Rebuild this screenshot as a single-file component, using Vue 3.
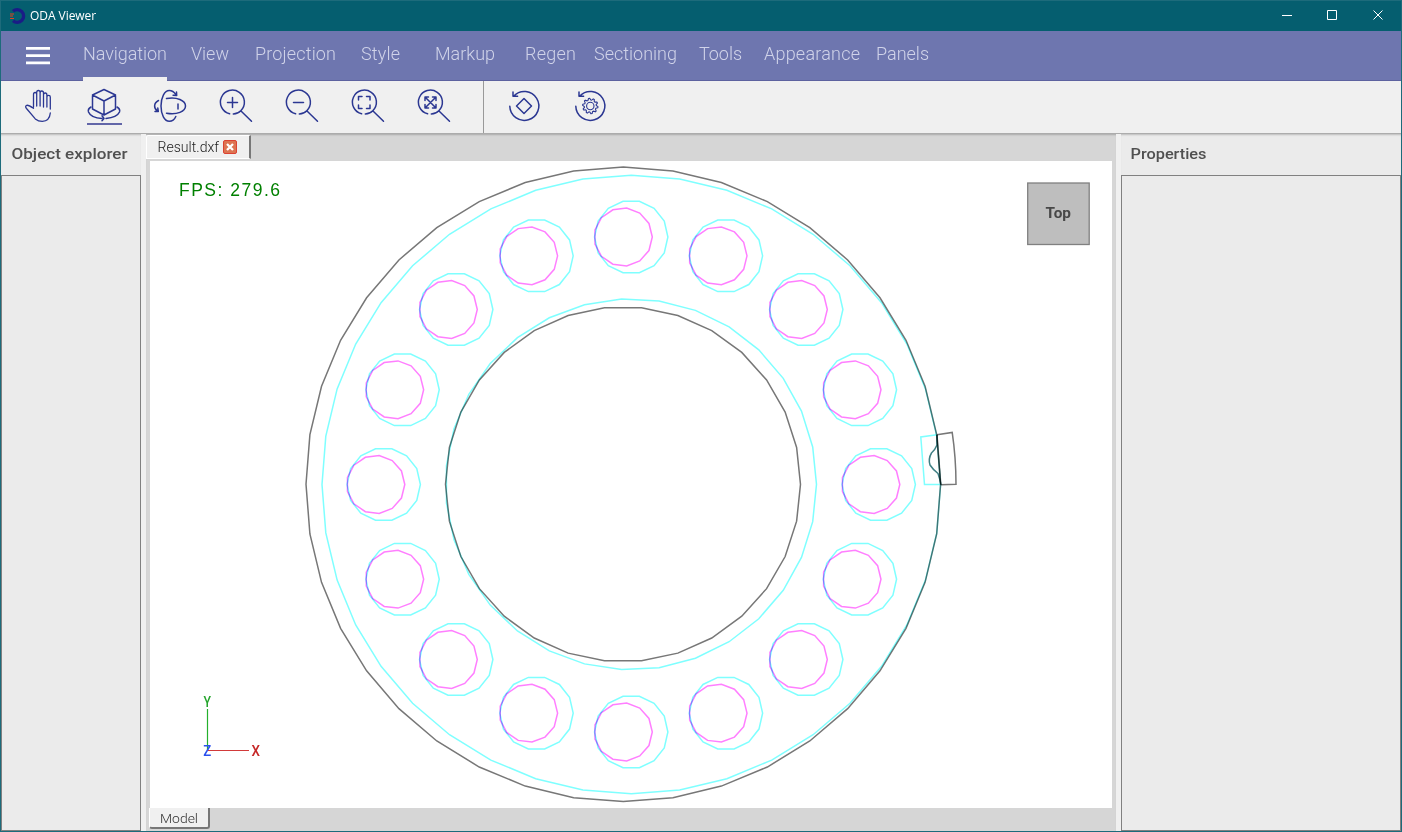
<script setup>
const menu = [
  { t: 'Navigation', x: 83, w: 84, on: true }, { t: 'View', x: 191, w: 38 },
  { t: 'Projection', x: 255, w: 81 }, { t: 'Style', x: 361, w: 39 },
  { t: 'Markup', x: 435, w: 60 }, { t: 'Regen', x: 525, w: 51 },
  { t: 'Sectioning', x: 594, w: 83 }, { t: 'Tools', x: 699, w: 43 },
  { t: 'Appearance', x: 764, w: 96 }, { t: 'Panels', x: 876, w: 53 }
].map((m, i, a) => ({ ...m, gap: i ? m.x - a[i - 1].x - a[i - 1].w : 0 }))

const poly = (cx, cy, r, n, start = 0) =>
  Array.from({ length: n }, (_, i) => {
    const a = ((start + (i * 360) / n) * Math.PI) / 180
    return (cx + r * Math.cos(a)).toFixed(2) + ',' + (cy - r * Math.sin(a)).toFixed(2)
  }).join(' ')

const holes = Array.from({ length: 16 }, (_, i) => {
  const a = (i * Math.PI) / 8
  const x = 623.2 + 247.5 * Math.cos(a)
  const y = 484.5 - 247.5 * Math.sin(a)
  return { c: poly(x + 8, y, 36.7, 14), m: poly(x, y, 29.1, 13) }
})

// Ten-tooth gear outline: two outer and two inner points per tooth
const gear = Array.from({ length: 40 }, (_, i) => {
  const a = ((i * 9 + 4.5) * Math.PI) / 180
  const r = i % 4 < 2 ? 7.7 : 6
  return (590.3 + r * Math.cos(a)).toFixed(2) + ',' + (106 + r * Math.sin(a)).toFixed(2)
}).join(' ')
</script>

<template>
  <div class="window">
    <header class="title">
      <svg class="logo" width="18" height="18" viewBox="0 0 18 18">
        <path d="M5 4.200A6.400 6.400 0 1 1 5 13.800" fill="none" stroke="#1a1c86" stroke-width="3.300" />
        <path d="M2 7h4M2 9h3M2 11.500h4" stroke="#e0441f" stroke-width="1.200" />
      </svg>
      <span class="app-name">ODA Viewer</span>
      <svg class="controls" width="104" height="12" viewBox="0 0 104 12" fill="none" stroke="#fff">
        <path d="M0 6.500h10M45.500 1.500h9v9h-9zM91.500 1.500l9 9M100.500 1.500l-9 9" />
      </svg>
    </header>

    <nav class="menu">
      <svg class="burger" width="24" height="19" viewBox="0 0 24 19"><path d="M0 2.300h24M0 9.700h24M0 16.800h24" stroke="#fff" stroke-width="2.700" /></svg>
      <div v-for="m in menu" :key="m.t" class="item" :class="{ on: m.on }" :style="{ width: m.w + 'px', marginLeft: m.gap + 'px' }">
        <svg :width="m.w + 2" height="50"><text x="0" y="29" :textLength="m.w">{{ m.t }}</text></svg>
      </div>
    </nav>

    <div class="toolbar">
      <svg width="640" height="52" viewBox="1 81 640 52" fill="none" stroke="#2b3792" stroke-width="1.500" stroke-linecap="round" stroke-linejoin="round">
        <path d="M33.500 107V94.500q0-2 1.600-2t1.600 2V106M36.700 106V92.500q0-2 1.700-2t1.700 2V106M40.100 93q0-2 1.700-2t1.700 2V107M43.500 95q0-2 1.700-2t1.700 2V107M46.900 97q0-1.700 1.700-1.700t1.700 1.700V109M50.300 113q-.7 8-8 8.400q-4 0-7-2.500L26.500 108.500q-1.800-2.500.2-3.200q1.700-.5 6.800 3" stroke-width="1.300" />
        <path d="M104 89.500L115.500 95V109L104 115 92.500 109V95zM92.500 95L104 101 115.500 95M104 101V115" />
        <path d="M91 107Q87.500 109 88.500 112Q91 118 102 118.500M102 115.800l2 2.700-2 2.200M117 107Q120.500 109 119.500 112Q117 117.500 106 118.500" />
        <path d="M87 124h35" stroke="#6266a8" stroke-width="2" stroke-linecap="butt" />
        <path d="M175.800 94.500C174 91.800 171.800 90.500 169.300 90.500C164.500 90.500 161 97.500 161 106C161 114.500 164.500 121.300 169.300 121.300C172 121.300 174.500 119.500 175.800 116.500M176.500 92l.2 3.500-3.600-.2" />
        <path d="M166.500 98.500C177 96.500 185.500 100.500 185.500 106C185.500 111.500 177 115 166.500 113.200M158.500 100.500C153.500 103 153.500 108.500 157.500 111M155 111.500l3.300-.1-.5-3.300M178 104v5" />
        <g v-for="x in [232.300, 298.300, 364.300, 430.300]" :key="x">
          <path :d="`M${x - 2.700} 113.800A12 12 0 1 1 ${x + 8.500} 110.700Q${x + 5.500} 113.800 ${x + 1} 114M${x + 8.700} 111l10.500 10.300`" />
        </g>
        <path d="M227.500 102.500h10M232.500 97.500v10M293.500 102.500h10M358.500 100v-3.500h3.500M366.500 96.500h3.500v3.500M370 105v3.500h-3.500M362 108.500h-3.500v-3.500" />
        <path d="M425 97l11 11M436 97l-11 11M425 100.500V97h3.500M432.500 97h3.500v3.500M436 104.500v3.500h-3.500M428.500 108h-3.500v-3.500" />
        <g v-for="x in [524.300, 590.300]" :key="x">
          <path :d="`M${x - 14.500} 106.300A14.500 14.500 0 1 0 ${x - 10.500} 95.900M${x - 11.300} 92v4.300h4.600`" />
        </g>
        <path d="M524 98.500l7.500 7.500-7.500 7.500-7.500-7.500z" />
        <polygon :points="gear" stroke-width="1.100" />
        <circle cx="590.300" cy="106" r="3.700" stroke-width="1.100" />
        <path d="M483.500 81v52" stroke="#999" stroke-width="1" />
      </svg>
    </div>

    <main class="body">
      <aside class="panel left"><h2><svg width="130" height="40"><text x="10.500" y="25" textLength="116" lengthAdjust="spacingAndGlyphs">Object explorer</text></svg></h2><div class="list"></div></aside>
      <section class="center">
        <div class="tabs">
          <div class="tab">
            <svg width="100" height="24"><text x="10.500" y="18" textLength="61.500" lengthAdjust="spacingAndGlyphs">Result.dxf</text>
              <rect x="76.500" y="6.500" width="13" height="13" rx="1.500" fill="#dd7452" stroke="#dc4232" />
              <path d="M80 10l6 6M86 10l-6 6" stroke="#fff" stroke-width="2.300" />
            </svg>
          </div>
        </div>
        <svg class="view" width="962" height="647" viewBox="150 161 962 647">
          <g class="drawing" fill="none" stroke-width="1.500">
            <polygon :points="poly(623.3, 484.300, 317.300, 40)" stroke="#777" />
            <polygon :points="poly(631.3, 484.500, 309.300, 40)" stroke="#7fffff" />
            <polygon :points="poly(623, 484.300, 177.500, 30)" stroke="#777" />
            <polygon :points="poly(631, 484.300, 185.500, 31)" stroke="#7fffff" />
            <template v-for="(h, i) in holes" :key="i">
              <polygon :points="h.c" stroke="#7fffff" />
              <polygon :points="h.m" stroke="#ff7fff" />
            </template>
            <path d="M937 434.700L920.800 437 924.500 484.500H940.800" stroke="#7fffff" />
            <path d="M937 434.700L952.200 432.400Q956 458 956 484.300L940.800 484.800" stroke="#777" />
            <path d="M937 434.700L940.800 484.800" stroke="#777" />
            <path d="M937 435V445Q935 450 931.500 453Q928 459 930 465Q932.500 469 938 473.500Q940 479 940.800 484.500" stroke="#3f7f84" />
          </g>
          <text class="fps" x="179" y="196" textLength="101">FPS: 279.6</text>
          <rect x="1027.700" y="183" width="61.500" height="61.500" fill="#bebebe" stroke="#808080" stroke-width="1.300" />
          <text class="cube" x="1045.500" y="218" textLength="25.500" lengthAdjust="spacingAndGlyphs">Top</text>
          <path d="M207.500 709v41" stroke="#24b02c" stroke-width="1.200" />
          <path d="M208 750.500h41" stroke="#d23a3a" stroke-width="1.200" />
          <g class="axis"><text x="203.600" y="707" fill="#25a52d" textLength="7.500" lengthAdjust="spacingAndGlyphs">Y</text><text x="251.400" y="756" fill="#c62828" textLength="8.500" lengthAdjust="spacingAndGlyphs">X</text><text x="203.300" y="755.700" fill="#2a50ee" textLength="8" lengthAdjust="spacingAndGlyphs">Z</text></g>
        </svg>
        <div class="foot"><div class="model"><svg width="58" height="18"><text x="10" y="14.500" textLength="38" lengthAdjust="spacingAndGlyphs">Model</text></svg></div></div>
      </section>
      <aside class="panel right"><h2><svg width="130" height="40"><text x="9.500" y="25" textLength="76" lengthAdjust="spacingAndGlyphs">Properties</text></svg></h2><div class="list"></div></aside>
    </main>
  </div>
</template>

<style scoped>
* { box-sizing: border-box; }
svg { display: block; }
.window { width: 1402px; height: 832px; display: flex; flex-direction: column; border: 1px solid #1d6b7b; background: #f0f0f0; font-family: Roboto, "Liberation Sans", sans-serif; overflow: hidden; }
.title { height: 30px; flex: none; background: #055e6f; display: flex; align-items: center; padding: 0 16px 0 7px; }
.logo { margin-top: -1px; }
.app-name { margin: -2px 0 0 4px; color: #fff; font: 12px "Open Sans", "Noto Sans", sans-serif; letter-spacing: -.05px; }
.controls { margin-left: auto; margin-right: -1px; margin-top: -2px; }
.menu { height: 50px; flex: none; background: #6e76af; display: flex; border-bottom: 1px solid #5d629f; }
.burger { margin: 15px 33px 0 25px; }
.item { flex: none; height: 50px; }
.item.on { border-bottom: 4px solid #f0f0f0; }
.item svg { overflow: visible; }
.item text { font-size: 18px; font-weight: 300; fill: #d0d3e9; }
.toolbar { height: 53px; flex: none; background: #f0f0f0; border-bottom: 1px solid #acacac; }
.body { flex: 1; display: flex; min-height: 0; }
.panel { display: flex; flex-direction: column; background: #ebebeb; box-shadow: inset 0 2px 2px -1px #bbb; }
.left { width: 140px; margin-right: 5px; }
.right { width: 280px; margin-left: 5px; }
.panel h2 { height: 41px; margin: 0; flex: none; }
.panel h2 text { font: 500 15px Roboto, sans-serif; fill: #505050; }
.list { flex: 1; border: 1px solid #808080; background: #ebebeb; }
.center { width: 970px; background: #d6d6d6; display: flex; flex-direction: column; box-shadow: inset 0 2px 2px -1px #aaa; }
.tabs { height: 27px; flex: none; padding-top: 1px; }
.tab { width: 105px; height: 24px; background: #f0f0f0; border: 1px solid #fff; border-right: 2px solid #777; border-radius: 2px 1px 0 0; }
.tab svg { margin-top: -2px; }
.tab text { font-size: 14px; font-weight: 300; fill: #222; }
.view { margin-left: 4px; background: #fff; flex: none; }
.drawing > * { mix-blend-mode: multiply; }
.fps { font: 17.500px "Liberation Sans", sans-serif; fill: #008000; }
.cube { font: 700 15px Roboto, sans-serif; fill: #484848; }
.axis { font: 500 14px Roboto, sans-serif; }
.foot { flex: 1; }
.model { margin: 0 0 0 3px; width: 61px; height: 21px; background: #f0f0f0; border-left: 1px solid #fff; border-right: 2px solid #777; border-bottom: 2px solid #777; border-radius: 0 0 3px 3px; }
.model text { font-size: 13.500px; fill: #333; font-weight: 300; }
</style>
